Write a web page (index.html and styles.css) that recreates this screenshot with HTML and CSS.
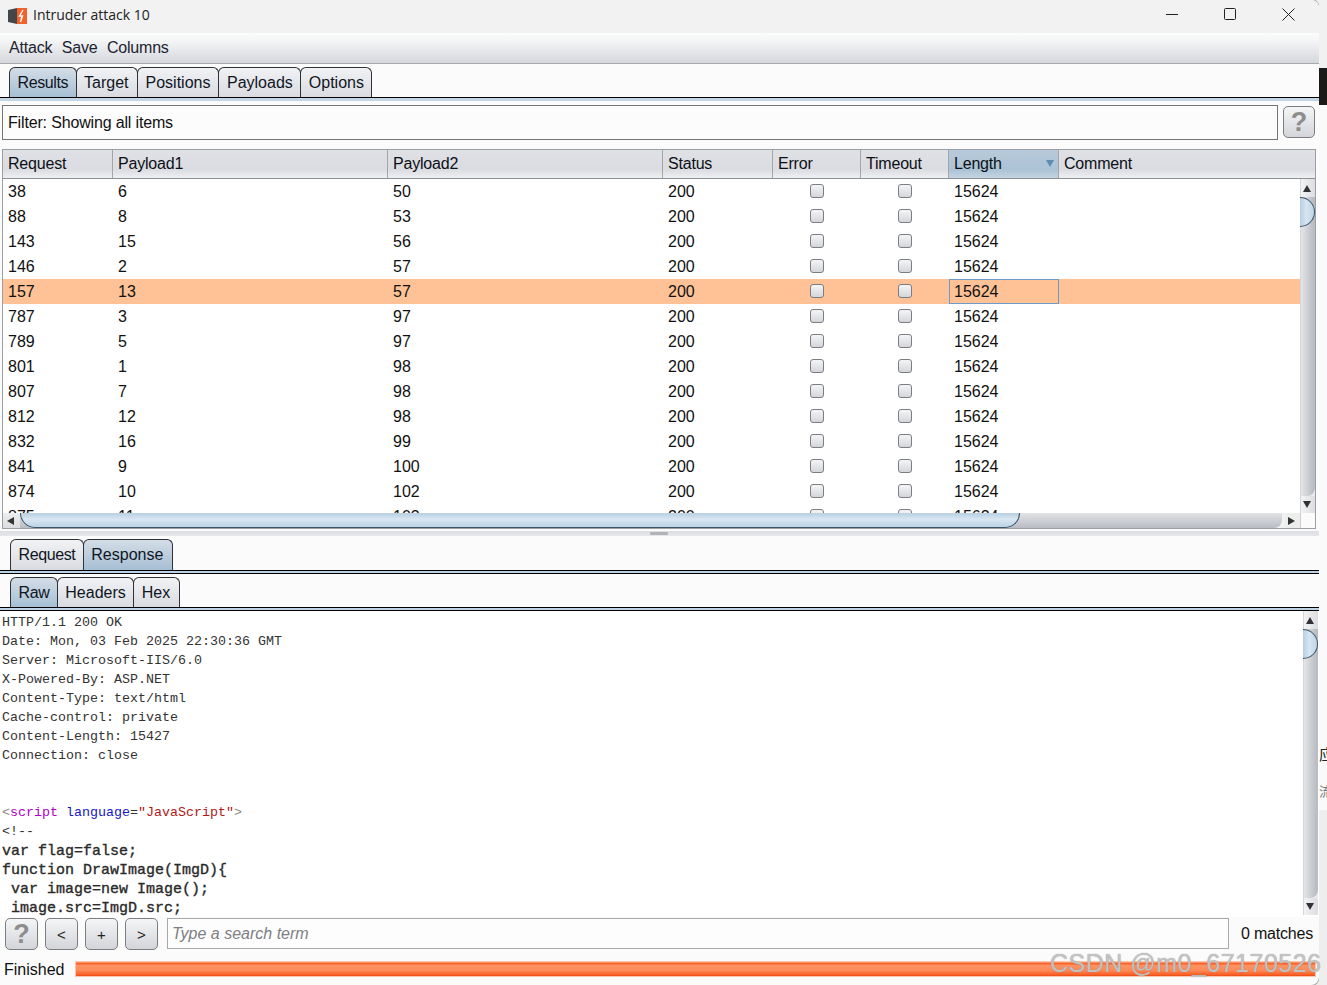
FILE: index.html
```html
<!DOCTYPE html>
<html lang="en">
<head>
<meta charset="utf-8">
<title>Intruder attack 10</title>
<link rel="stylesheet" href="styles.css">
</head>
<body>
<div class="desk">
<main class="window">
  <header class="titlebar">
    <svg class="logo" width="20" height="18" viewBox="0 0 20 18"><path d="M0 3 L9 1 V17 L0 15Z" fill="#44464a"/><path d="M9 1 H19 V17 H9Z" fill="#f4602a"/><path d="M15 3 L11.5 9 H14.5 L12.5 15 M14.5 9 L13 12" fill="none" stroke="#fff" stroke-width="1.4"/></svg>
    <span class="title">Intruder attack 10</span>
    <div class="winbtns">
      <svg width="12" height="12" viewBox="0 0 12 12"><path d="M0 6.5H12" stroke="#222" stroke-width="1"/></svg>
      <svg width="12" height="12" viewBox="0 0 12 12"><rect x=".5" y=".5" width="11" height="11" rx="1" fill="none" stroke="#222"/></svg>
      <svg width="13" height="13" viewBox="0 0 13 13"><path d="M.5 .5L12.5 12.5M12.5 .5L.5 12.5" stroke="#222" stroke-width="1"/></svg>
    </div>
  </header>
  <nav class="menubar"><span>Attack</span><span>Save</span><span>Columns</span></nav>

  <div class="tabs tabs-main">
    <span class="tab active tight">Results</span><span class="tab">Target</span><span class="tab">Positions</span><span class="tab">Payloads</span><span class="tab">Options</span>
  </div>
  <div class="tabline"></div>

  <div class="filterrow">
    <div class="filter">Filter: Showing all items</div>
    <button class="btn help help-top">?</button>
  </div>

  <section class="results">
    <div class="thead">
      <div class="th">Request</div><div class="th">Payload1</div><div class="th">Payload2</div><div class="th">Status</div><div class="th">Error</div><div class="th">Timeout</div><div class="th sorted">Length<i class="sort"></i></div><div class="th">Comment</div>
    </div>
    <div class="tbodywrap">
      <div class="tbody" id="rows"></div>
      <div class="vscroll">
        <div class="arrow up"></div>
        <div class="vtrack"><div class="vthumb"></div></div>
        <div class="arrow down"></div>
      </div>
    </div>
    <div class="hscroll">
      <div class="arrow left"></div>
      <div class="htrack"><div class="hthumb"></div></div>
      <div class="arrow right"></div>
      <div class="corner"></div>
    </div>
  </section>

  <div class="splitter"><i></i></div>

  <div class="tabs tabs-sub">
    <span class="tab tight">Request</span><span class="tab active">Response</span>
  </div>
  <div class="tabline closed"></div>
  <div class="tabs tabs-sub2">
    <span class="tab active tight">Raw</span><span class="tab">Headers</span><span class="tab">Hex</span>
  </div>
  <div class="tabline closed"></div>

  <section class="response">
    <div class="raw">
      <div class="ln">HTTP/1.1 200 OK</div>
      <div class="ln">Date: Mon, 03 Feb 2025 22:30:36 GMT</div>
      <div class="ln">Server: Microsoft-IIS/6.0</div>
      <div class="ln">X-Powered-By: ASP.NET</div>
      <div class="ln">Content-Type: text/html</div>
      <div class="ln">Cache-control: private</div>
      <div class="ln">Content-Length: 15427</div>
      <div class="ln">Connection: close</div>
      <div class="ln">&nbsp;</div>
      <div class="ln">&nbsp;</div>
      <div class="ln"><span class="c-br">&lt;</span><span class="c-tag">script</span> <span class="c-attr">language</span>=<span class="c-val">"JavaScript"</span><span class="c-br">&gt;</span></div>
      <div class="ln">&lt;!--</div>
      <div class="ln js">var flag=false;</div>
      <div class="ln js">function DrawImage(ImgD){</div>
      <div class="ln js">&nbsp;var image=new Image();</div>
      <div class="ln js">&nbsp;image.src=ImgD.src;</div>
    </div>
    <div class="vscroll vscroll-raw">
      <div class="arrow up"></div>
      <div class="vtrack"><div class="vthumb"></div></div>
      <div class="arrow down"></div>
    </div>
  </section>

  <div class="searchrow">
    <button class="btn help">?</button>
    <button class="btn small">&lt;</button>
    <button class="btn small">+</button>
    <button class="btn small">&gt;</button>
    <div class="search">Type a search term</div>
    <span class="matches">0 matches</span>
  </div>

  <footer class="statusrow">
    <span class="status">Finished</span>
    <div class="progress"></div>
  </footer>
</main>
<aside class="backdrop">
  <div class="bd bd1"></div><div class="bd bd2"></div><div class="bd bd3"><span class="bdtext t1">应</span><span class="bdtext t2">流</span></div><div class="bd bd4"></div>
</aside>
<div class="watermark">CSDN @m0_67170526</div>
</div>
<script src="rows.js"></script>
</body>
</html>
```

FILE: rows.js
```js
var data = [[38,6,50],[88,8,53],[143,15,56],[146,2,57],[157,13,57],[787,3,97],[789,5,97],[801,1,98],[807,7,98],[812,12,98],[832,16,99],[841,9,100],[874,10,102],[875,11,103]];
var html = '';
data.forEach(function (r, i) {
  var sel = i === 4;
  html += '<div class="tr' + (sel ? ' selected' : '') + '">' +
    '<div class="td">' + r[0] + '</div><div class="td">' + r[1] + '</div><div class="td">' + r[2] + '</div><div class="td">200</div>' +
    '<div class="td check"><i class="cb"></i></div><div class="td check"><i class="cb"></i></div>' +
    '<div class="td' + (sel ? ' focus' : '') + '">15624</div><div class="td"></div></div>';
});
document.getElementById('rows').innerHTML = html;
```

FILE: styles.css
```css
* { box-sizing: border-box; }
html, body { margin: 0; padding: 0; }
body { width: 1327px; height: 985px; overflow: hidden; background: #f0f0f0; font-family: "Liberation Sans", Arial, sans-serif; font-size: 16px; letter-spacing: -0.2px; color: #111; }
.desk { position: relative; display: flex; height: 985px; }

.window { width: 1319px; height: 985px; background: #fbfbfb; border-radius: 0 8px 8px 0; overflow: hidden; display: flex; flex-direction: column; box-shadow: 0 0 0 1px #a8a8a8; }
.backdrop { width: 8px; display: flex; flex-direction: column; overflow: hidden; }
.bd1 { height: 68px; background: #f1f1f1; }
.bd2 { height: 37px; background: #1c1a19; }
.bd3 { height: 705px; background: #fafafa; position: relative; }
.bd4 { flex: 1; background: #eeeeee; }
.bdtext { position: absolute; left: 0; font-family: "Noto Sans CJK SC", sans-serif; letter-spacing: 0; }
.t1 { top: 638px; font-size: 15px; color: #222; }
.t2 { top: 676px; font-size: 13px; color: #777; }

.titlebar { height: 33px; flex: none; background: #f2f2f2; display: flex; align-items: center; padding-left: 8px; }
.logo { display: block; margin-top: -2px; }
.title { margin-left: 5px; margin-top: -5px; font-family: "Open Sans", sans-serif; font-size: 14px; letter-spacing: 0; color: #222; }
.winbtns { margin-left: auto; display: flex; align-items: center; gap: 46px; padding-right: 24px; margin-top: -5px; }
.winbtns svg { display: block; }

.menubar { height: 31px; flex: none; background: linear-gradient(#fbfcfc 0%, #f4f5f6 25%, #d5d7dc 100%); border-bottom: 1px solid #a5a8ac; display: flex; align-items: center; padding: 0 0 0 9px; gap: 9.5px; letter-spacing: -0.2px; color: #1c2430; }

.tabs { display: flex; padding-left: 9px; flex: none; }
.tabs-main { height: 33px; padding-top: 3px; }
.tabs-sub { height: 31px; padding-left: 10px; }
.tabs-sub2 { height: 30px; margin-top: 3px; padding-left: 10px; }
.tab { display: flex; align-items: center; padding: 0 7.5px; margin-right: -1px; border: 1px solid #2e3136; border-bottom: 0; border-radius: 6px 6px 0 0; background: linear-gradient(#f1f2f4, #d9dbe0); letter-spacing: 0; color: #10161f; }
.tabs-main .tab:nth-child(2) { padding: 0 8.5px 0 7.5px; }
.tabs-main .tab:nth-child(3) { padding: 0 8px 0 7.5px; }
.tabs-sub .tab.active, .tabs-sub2 .tab:last-child { padding-right: 8.5px; }
.tab.tight { letter-spacing: -0.4px; }
.tab.active { background: linear-gradient(#d3dde6, #a6bfd4); position: relative; z-index: 1; }

.tabline { height: 4px; flex: none; background: #c2d6e6; border-top: 1px solid #000; }
.tabline.closed { height: 4px; border-bottom: 1px solid #000; background: #bdd3e5; }

.filterrow { height: 48px; flex: none; display: flex; align-items: flex-start; padding: 4px 0 0 2px; }
.filter { width: 1276px; height: 35px; border: 1px solid #747474; background: #fcfcfc; display: flex; align-items: center; padding-left: 5px; letter-spacing: -0.16px; }
.btn { padding: 0; font-family: "Liberation Sans", Arial, sans-serif; border: 1px solid #7b7d80; border-radius: 5px; background: linear-gradient(#f4f5f6, #d3d5da); color: #222; display: flex; align-items: center; justify-content: center; }
.help { width: 33px; height: 32px; font-size: 27px; font-weight: bold; color: #8d8d8d; }
.help-top { margin: 1px 0 0 5px; width: 32px; }

.results { flex: none; height: 380px; margin-left: 2px; width: 1314px; display: flex; flex-direction: column; border: 1px solid #9b9ea2; }
.thead { height: 29px; flex: none; display: grid; grid-template-columns: 110px 275px 275px 110px 88px 88px 110px 1fr; background: linear-gradient(#e0e1e5 0%, #dbdce1 70%, #eff0f2 100%); border-bottom: 1px solid #8c8f93; }
.th { display: flex; align-items: center; padding-left: 5px; border-right: 1px solid #a2a5aa; color: #0c1016; position: relative; }
.th:last-child { border-right: 0; }
.th.sorted { background: linear-gradient(#b7cada 0%, #abc3d6 70%, #c3d4e2 100%); }
.sort { position: absolute; right: 4px; top: 10px; width: 0; height: 0; border: 4px solid transparent; border-top: 7px solid #5f8ab3; border-bottom: 0; }

.tbodywrap { height: 334px; flex: none; display: flex; }
.tbody { flex: 1; min-width: 0; overflow: hidden; background: #fff; }
.tr { height: 25px; display: grid; grid-template-columns: 110px 275px 275px 110px 88px 88px 110px 1fr; }
.tr.selected { background: #fec296; }
.td { display: flex; align-items: center; padding: 1px 0 0 5px; letter-spacing: 0; color: #111; }
.td.check { justify-content: center; padding: 0 1px 1px 0; }
.td.focus { border: 1px solid #6f9bcb; padding: 0 0 0 4px; }
.cb { display: block; width: 14px; height: 14px; border: 1px solid #7b7d82; border-radius: 3px; background: linear-gradient(#f4f5f6, #d4d6da); }

.vscroll { width: 15px; flex: none; display: flex; flex-direction: column; background: #e9eaec; border-left: 1px solid #d4d6d8; }
.arrow { flex: none; height: 17px; width: 100%; display: flex; align-items: center; justify-content: center; padding-right: 2px; background: linear-gradient(90deg, #f2f3f4, #dcdde0); }
.arrow.up { height: 18px; }
.arrow::before { content: ""; width: 0; height: 0; }
.arrow.up::before { border: 4px solid transparent; border-bottom: 7px solid #333; border-top: 0; }
.arrow.down::before { border: 4px solid transparent; border-top: 7px solid #333; border-bottom: 0; }
.arrow.left::before { border: 4px solid transparent; border-right: 7px solid #333; border-left: 0; }
.arrow.right::before { border: 4px solid transparent; border-left: 7px solid #333; border-right: 0; }
.vtrack { flex: 1; min-height: 0; background: linear-gradient(90deg, #e4e5e8, #b9bcc3 90%); border-radius: 0 0 8px 0; }
.vthumb { height: 30px; margin-left: -1px; background: linear-gradient(90deg, #b7cfe3, #d6e5f1 45%, #c0d6e8); border: 1px solid #3a5468; border-left: 0; border-radius: 0 15px 15px 0; }

.hscroll { height: 15px; flex: none; display: flex; background: #f0f1f2; }
.hscroll .arrow { width: 17px; height: 15px; background: linear-gradient(#eceded, #dcdde0); }
.hscroll .arrow.right { width: 15px; background: #eceded; }
.htrack { flex: 1; min-width: 0; margin-right: 3px; background: linear-gradient(#e2e3e6, #b9bcc3); border-radius: 0 0 8px 0; }
.hthumb { width: 1000px; height: 15px; background: linear-gradient(#b9cfe1, #d8e6f2 45%, #bcd3e6); border: 1px solid #3a5468; border-top: 0; border-radius: 0 0 15px 15px; }
.corner { width: 15px; flex: none; background: #fbfbfb; border-left: 1px solid #c9ccd0; }

.splitter { height: 8px; flex: none; margin-top: 2px; background: linear-gradient(#dcdee3, #e4e6ea 60%, #fbfbfb 60%); position: relative; }
.splitter i { position: absolute; left: 650px; top: 1px; width: 18px; height: 3px; background: #b0b3b8; border-radius: 1px; }

.response { flex: none; height: 307px; display: flex; background: #fff; }
.raw { flex: 1; min-width: 0; overflow: hidden; padding: 2px 0 0 2px; font-family: "Liberation Mono", "Courier New", monospace; font-size: 13.33px; letter-spacing: 0; color: #333; }
.vscroll-raw { margin: 0 1px 3px 0; }
.ln { height: 19px; line-height: 19px; white-space: pre; }
.ln.js { font-size: 15px; line-height: 21px; color: #2a2a2a; -webkit-text-stroke: 0.35px #2a2a2a; }
.c-br { color: #888; }
.c-tag { color: #b000c8; }
.c-attr { color: #1515c8; }
.c-val { color: #b01818; }

.searchrow { height: 37px; flex: none; display: flex; align-items: flex-start; padding: 1px 0 0 5px; background: #fbfbfb; margin-top: -1px; }
.searchrow .help { width: 33px; height: 32px; margin-right: 7px; }
.small { width: 33px; height: 32px; margin-right: 7px; font-size: 15px; color: #222; }
.small:nth-child(4) { margin-right: 9px; }
.search { width: 1062px; height: 31px; border: 1px solid #a8a8a8; background: #fdfdfd; display: flex; align-items: center; padding-left: 4px; font-style: italic; letter-spacing: 0; color: #7d7f83; }
.matches { margin-left: 12px; margin-top: 7px; color: #111; }

.statusrow { flex: none; height: 30px; display: flex; align-items: flex-start; padding: 5px 0 0 4px; }
.status { width: 71px; color: #111; padding-top: 2px; letter-spacing: 0; }
.progress { width: 1241px; height: 16px; margin-top: 2px; background: linear-gradient(#fbb38d 0%, #fb5f25 10%, #fc9263 25%, #fd8b58 60%, #fb5f25 90%, #e84a15 100%); border: 1px solid #fbc6ad; }

.watermark { position: absolute; left: 1050px; top: 949px; white-space: nowrap; font-size: 25px; letter-spacing: 0.5px; color: rgba(205, 205, 205, 0.85); text-shadow: 0 0 1px #888; }
```
